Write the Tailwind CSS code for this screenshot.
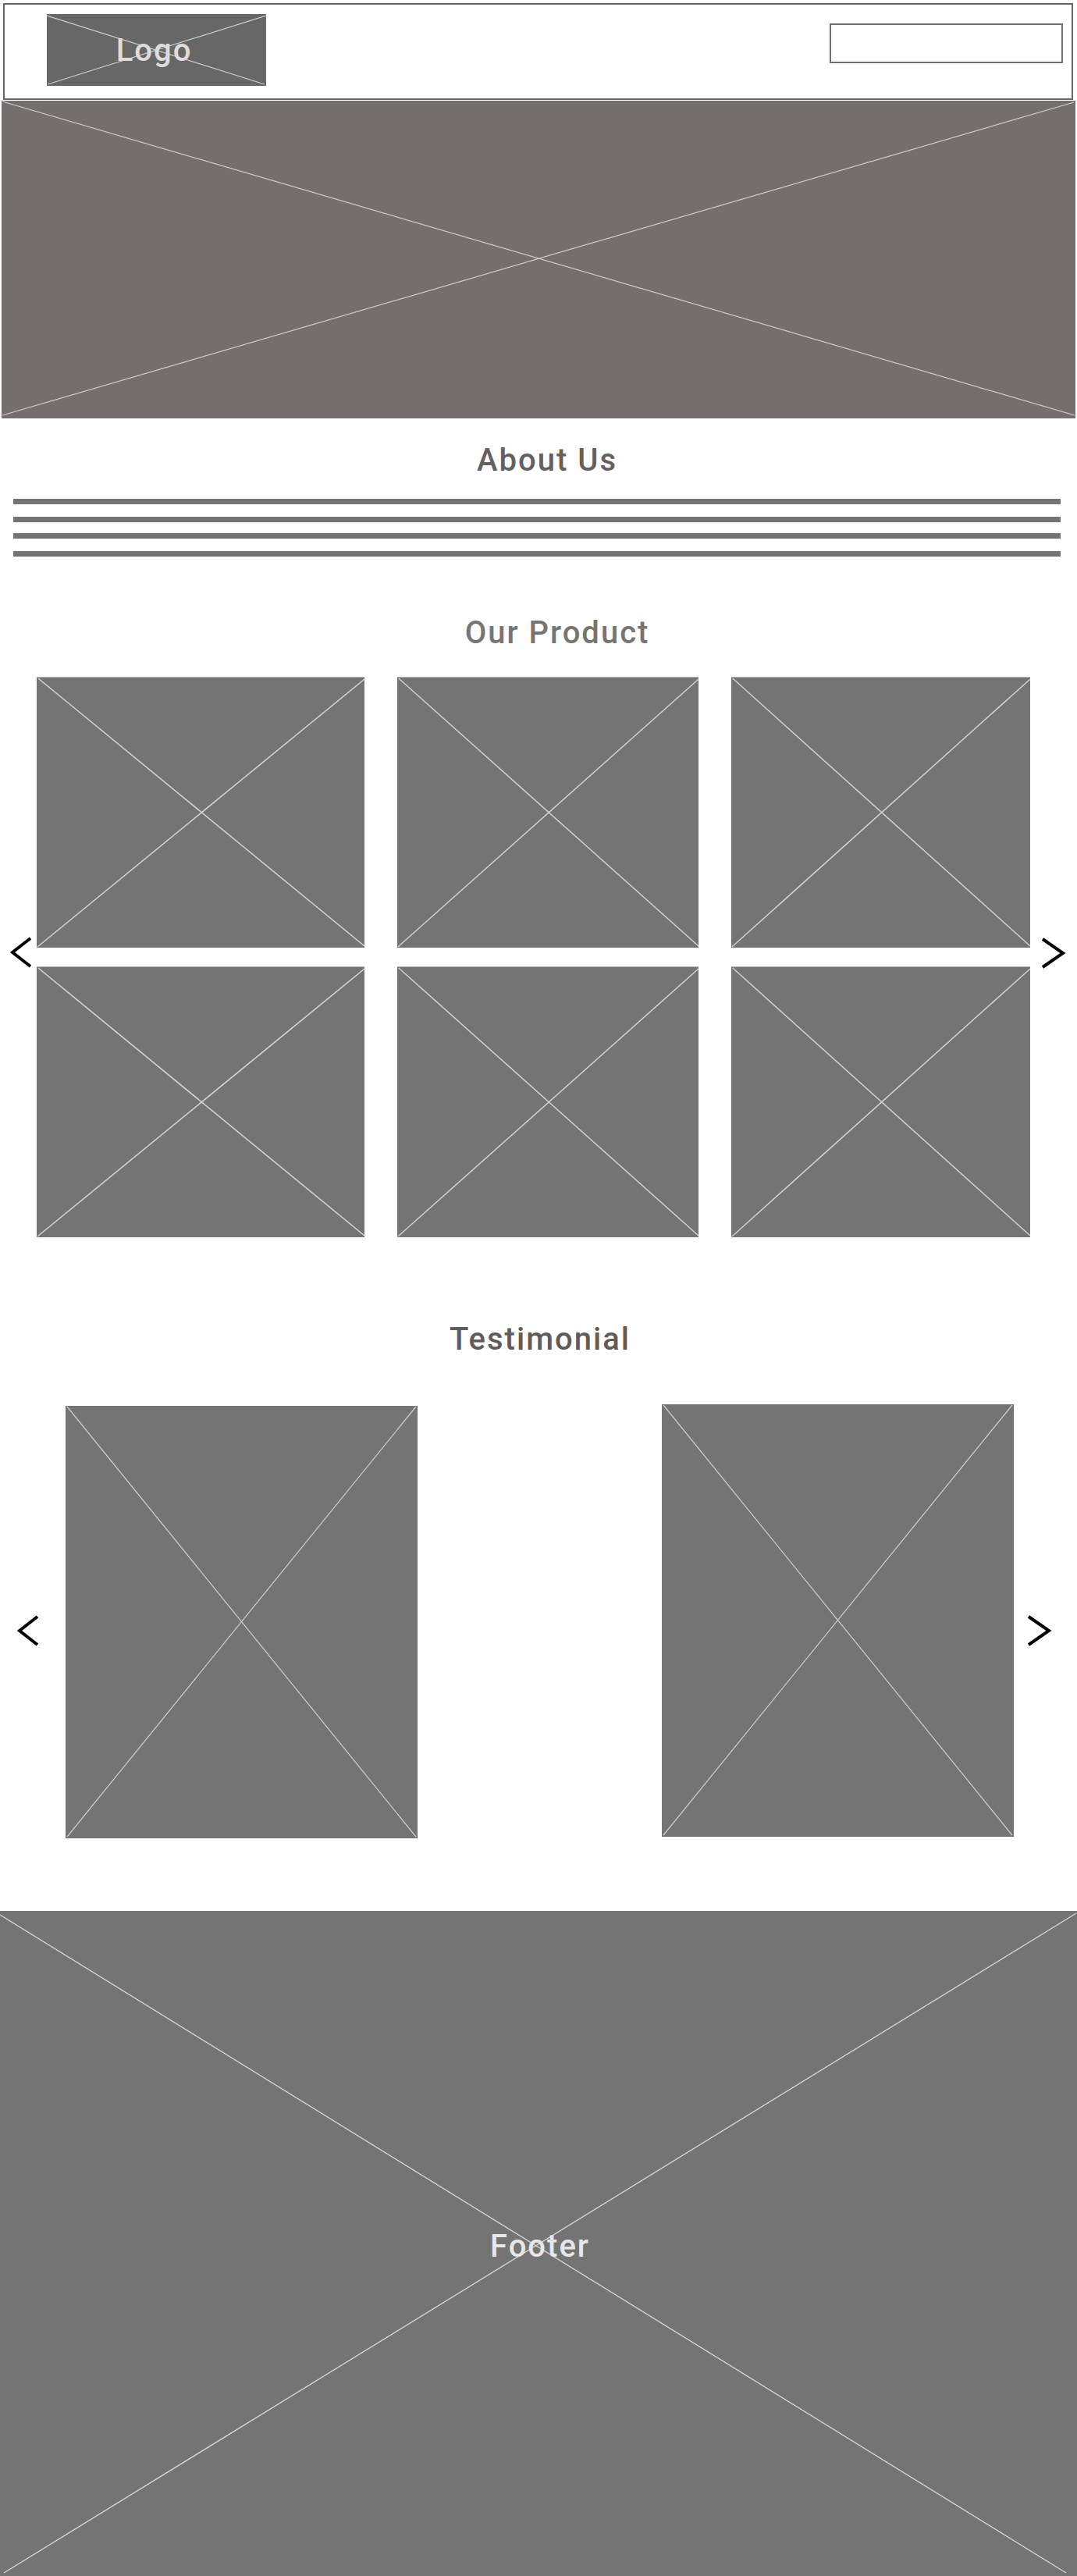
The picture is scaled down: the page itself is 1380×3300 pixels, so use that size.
<!DOCTYPE html>
<html lang="en">
<head>
<meta charset="utf-8">
<meta name="viewport" content="width=device-width, initial-scale=1">
<title>Home</title>
<script src="https://cdn.jsdelivr.net/npm/@tailwindcss/browser@4"></script>
</head>
<body class="bg-white font-[Roboto,sans-serif] text-[40px] leading-12 font-medium tracking-wider">

<header class="ml-1 mr-[5px] mt-1 flex h-[124px] items-start justify-between border-2 border-[#696767] pt-3 pl-[54px] pr-[11px]">
  <a href="#" class="relative flex h-[92px] w-[281px] items-center justify-center bg-[#676767] pt-0.5 pr-1.5 text-[#e0dcdc]">
    <svg class="absolute inset-0 size-full" viewBox="0 0 281 92" preserveAspectRatio="none" stroke="#d0cece" stroke-width="1.2" aria-hidden="true"><path d="M0 2 279 90M281 2 1 90"/></svg>
    <span class="relative">Logo</span>
  </a>
  <input type="search" aria-label="Search" class="mt-3 h-[51px] w-[299px] border-2 border-[#737070] bg-white px-3 text-xl">
</header>

<main>
  <section aria-label="Banner" class="mx-0.5 mt-px h-[407px] bg-[#746e6e]">
    <svg class="block size-full" viewBox="0 0 1376 407" preserveAspectRatio="none" stroke="#d0cece" stroke-width="1.2" aria-hidden="true"><path d="M1 1 1375 403M1374 2 1 403"/></svg>
  </section>

  <section class="pt-[30px] pr-[21px] pl-[17px]">
    <h2 class="pl-[26px] text-center text-[#646060]">About Us</h2>
    <div class="mt-[25px] flex flex-col">
      <div class="h-[7px] bg-[#747474]"></div>
      <div class="mt-4 h-[7px] bg-[#747474]"></div>
      <div class="mt-3.5 h-[7px] bg-[#747474]"></div>
      <div class="mt-4 h-[7px] bg-[#747474]"></div>
    </div>
  </section>

  <section class="pt-[74px]">
    <h2 class="pl-12 text-center text-[#757575]">Our Product</h2>
    <div class="mt-8 flex items-center">
      <button type="button" aria-label="Previous products" class="flex w-[47px] shrink-0 pb-3 pl-3">
        <svg class="h-10 w-8" viewBox="0 0 32 40" fill="none" stroke="#000" stroke-width="4" aria-hidden="true"><path d="M27 2 4 20 27 38"/></svg>
      </button>
      <div class="grid flex-1 grid-cols-[420fr_386fr_383fr] gap-x-[42px] gap-y-6">
        <svg class="h-[347px] w-full border-t border-[#b0b0b0] bg-[#747474]" viewBox="0 0 420 347" preserveAspectRatio="none" stroke="#d2d0d0" stroke-width="1.6" aria-hidden="true"><path d="M2 1 420 345M420 2 1 346"/></svg>
        <svg class="h-[347px] w-full border-t border-[#b0b0b0] bg-[#747474]" viewBox="0 0 420 347" preserveAspectRatio="none" stroke="#d2d0d0" stroke-width="1.6" aria-hidden="true"><path d="M2 1 420 345M420 2 1 346"/></svg>
        <svg class="h-[347px] w-full border-t border-[#b0b0b0] bg-[#747474]" viewBox="0 0 420 347" preserveAspectRatio="none" stroke="#d2d0d0" stroke-width="1.6" aria-hidden="true"><path d="M2 1 420 345M420 2 1 346"/></svg>
        <svg class="h-[347px] w-full border-t border-[#b0b0b0] bg-[#747474]" viewBox="0 0 420 347" preserveAspectRatio="none" stroke="#d2d0d0" stroke-width="1.6" aria-hidden="true"><path d="M2 1 420 345M420 2 1 346"/></svg>
        <svg class="h-[347px] w-full border-t border-[#b0b0b0] bg-[#747474]" viewBox="0 0 420 347" preserveAspectRatio="none" stroke="#d2d0d0" stroke-width="1.6" aria-hidden="true"><path d="M2 1 420 345M420 2 1 346"/></svg>
        <svg class="h-[347px] w-full border-t border-[#b0b0b0] bg-[#747474]" viewBox="0 0 420 347" preserveAspectRatio="none" stroke="#d2d0d0" stroke-width="1.6" aria-hidden="true"><path d="M2 1 420 345M420 2 1 346"/></svg>
      </div>
      <button type="button" aria-label="Next products" class="flex w-[60px] shrink-0 pb-2.5 pl-3.5">
        <svg class="h-10 w-8" viewBox="0 0 32 40" fill="none" stroke="#000" stroke-width="4" aria-hidden="true"><path d="M2 2 28 20 2 38"/></svg>
      </button>
    </div>
  </section>

  <section class="pt-[107px]">
    <h2 class="pl-1 text-center text-[#5f5b5b]">Testimonial</h2>
    <div class="mt-[59px] flex items-center">
      <button type="button" aria-label="Previous testimonials" class="flex w-[84px] shrink-0 pt-6 pl-[21px]">
        <svg class="h-10 w-8" viewBox="0 0 32 40" fill="none" stroke="#000" stroke-width="4" aria-hidden="true"><path d="M27 2 4 20 27 38"/></svg>
      </button>
      <div class="grid flex-1 grid-cols-[451fr_451fr] items-start gap-x-[313px]">
        <svg class="mt-0.5 h-[554px] w-full bg-[#747474]" viewBox="0 0 451 554" preserveAspectRatio="none" stroke="#d0cece" stroke-width="1.2" aria-hidden="true"><path d="M2 1 449 552M449 1 2 552"/></svg>
        <svg class="h-[554px] w-full bg-[#747474]" viewBox="0 0 451 554" preserveAspectRatio="none" stroke="#d0cece" stroke-width="1.2" aria-hidden="true"><path d="M2 1 449 552M449 1 2 552"/></svg>
      </div>
      <button type="button" aria-label="Next testimonials" class="flex w-[81px] shrink-0 pt-6 pl-[17px]">
        <svg class="h-10 w-8" viewBox="0 0 32 40" fill="none" stroke="#000" stroke-width="4" aria-hidden="true"><path d="M2 2 28 20 2 38"/></svg>
      </button>
    </div>
  </section>
</main>

<footer class="relative mt-[93px] flex h-[852px] items-center justify-center bg-[#747474] pt-2 pl-1 text-[#e8e6e6]">
  <svg class="absolute inset-0 size-full" viewBox="0 0 1380 852" preserveAspectRatio="none" stroke="#d8d8d8" stroke-width="1.3" aria-hidden="true"><path d="M0 5 1366 848M1379 3 5 848"/></svg>
  <p class="relative">Footer</p>
</footer>

</body>
</html>
